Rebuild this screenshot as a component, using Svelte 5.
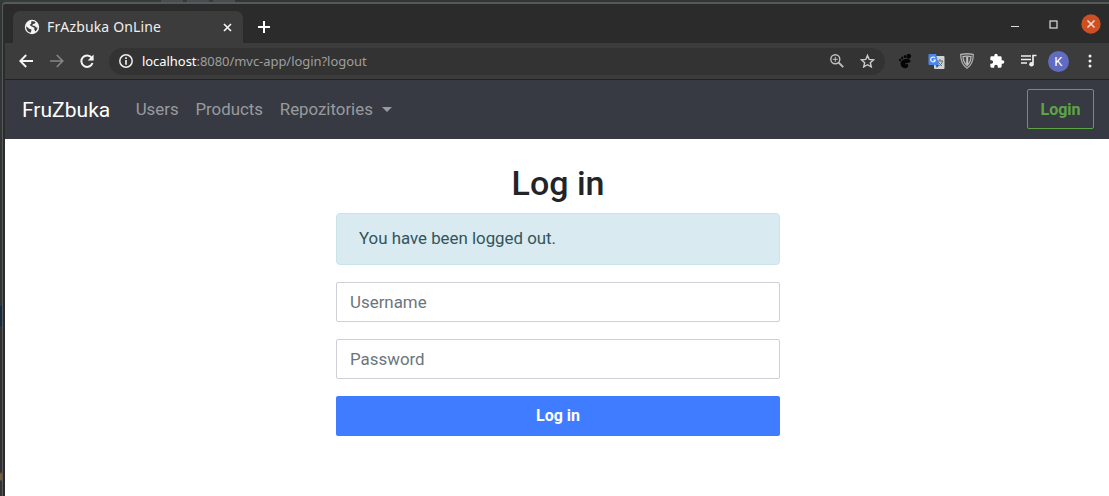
<script>
  const links = ['Users', 'Products'];
  let username = $state('');
  let password = $state('');
</script>

<div class="desktop">
  <div class="shade"></div>
  <div class="window">
    <header class="tabs">
      <div class="tab">
        <svg class="globe" width="16" height="16" viewBox="0 0 16 16"><circle cx="8" cy="8" r="7.2" fill="#f4f4f4"/><path d="M2.1 7.2l3.2 2.5c.6.5 1.8.2 2.1 1.1.2.9-.3 1.6-.8 3C4 13.2 2 10.800 2.100 7.200zM7.200 2.400c1.700-.5 3.400 0 4.500.8l-1.300 1.500-1.500.2-.7 1.700 2.800.3 1.100 1.500 1.500.2c-.2 1.500-1 2.900-2.100 3.800l-1.300-1.800.3-1.800-2.800-1.300-2-1.600 1.600-1.500z" fill="#3c3c3c"/></svg>
        <span class="title">FrAzbuka OnLine</span>
        <svg class="x" width="9" height="9" viewBox="0 0 9 9"><path d="M1 1l7 7M8 1L1 8" stroke="#f2f2f2" stroke-width="1.7"/></svg>
      </div>
      <svg class="plus" width="12" height="12" viewBox="0 0 12 12"><path d="M6 0v12M0 6h12" stroke="#fff" stroke-width="2"/></svg>
      <div class="controls">
        <svg width="8" height="14" viewBox="0 0 8 14"><path d="M0 9.500h8" stroke="#ddd"/></svg>
        <svg width="9" height="9" viewBox="0 0 9 9"><rect x="1" y="1" width="7" height="7" fill="none" stroke="#ddd" stroke-width="1.200"/></svg>
        <svg width="20" height="20" viewBox="0 0 20 20"><circle cx="10" cy="10" r="9.700" fill="#cd4f22"/><path d="M6.500 6.500l7 7M13.500 6.500l-7 7" stroke="#f6ded5" stroke-width="1.500"/></svg>
      </div>
    </header>

    <div class="toolbar">
      <svg width="14" height="14" viewBox="0 0 14 14" fill="none" stroke="#f4f4f4" stroke-width="1.900"><path d="M14 7H1.500M7.200 1L1.300 7l5.900 6"/></svg>
      <svg class="forward" width="14" height="14" viewBox="0 0 14 14" fill="none" stroke="#858585" stroke-width="1.700"><path d="M0 7h12.500M6.800 1l5.900 6-5.900 6"/></svg>
      <svg class="reload" width="14" height="14" viewBox="0 0 14 14"><path d="M11.600 3.700A5.700 5.700 0 1 0 12.500 9" fill="none" stroke="#f4f4f4" stroke-width="2"/><path d="M13.600.5v6H7.700z" fill="#f4f4f4"/></svg>
      <div class="address">
        <svg width="14" height="14" viewBox="0 0 14 14"><circle cx="7" cy="7" r="6.200" fill="none" stroke="#eee" stroke-width="1.500"/><path d="M7 6v4.700M7 3.300v1.600" stroke="#eee" stroke-width="1.700"/></svg>
        <span class="url"><b>localhost</b>:8080/mvc-app/login?logout</span>
        <svg class="search" width="14" height="14" viewBox="0 0 14 14" fill="none" stroke="#c1c1c1"><circle cx="5.300" cy="5.300" r="4.500" stroke-width="1.400"/><path d="M8.700 8.700l4.500 4.500" stroke-width="1.900"/><path d="M2.800 5.300h5M5.300 2.800v5"/></svg>
        <svg width="15" height="14" viewBox="0 0 15 14"><path d="M7.500 1.400l1.700 4 4.400.4-3.300 2.900 1 4.200-3.800-2.200-3.800 2.200 1-4.200-3.300-2.900 4.400-.4z" fill="none" stroke="#ccc" stroke-width="1.400"/></svg>
      </div>
      <div class="extensions">
        <svg width="16" height="16" viewBox="0 0 16 16" fill="#050505"><ellipse cx="11.700" cy="3.300" rx="2.300" ry="2.500" transform="rotate(20 11.700 3.300)"/><ellipse cx="8" cy="3.600" rx="1.200" ry="1.600"/><ellipse cx="5.200" cy="5" rx="1.100" ry="1.500"/><ellipse cx="3" cy="7" rx="1" ry="1.300"/><path d="M11.300 6.200C8 5.300 3.700 7.400 3.600 10.300c-.1 3.400 2.600 5.300 5.200 4.900 2.300-.4 3-2.900 1.900-3.900-.9-.8-2 .4-2.600-.2-.9-1.100 5.200-.5 5.600-3 .1-1-1.200-1.700-2.400-1.900z"/></svg>
        <svg width="17" height="17" viewBox="0 0 17 17"><rect x="6" y="3" width="10.500" height="13" rx="1" fill="#d1d3d5"/><path d="M9 8h6M12 6v2M14.500 8c-.5 3-2 4-4 5M10 9l4 4" fill="none" stroke="#647078"/><path d="M1.500 1H8l3 11H1.500a1 1 0 0 1-1-1V2a1 1 0 0 1 1-1z" fill="#4d86e9"/><path d="M7.500 12H11l-2.200 3z" fill="#315bb2"/><path d="M7 5A2.400 2.400 0 1 0 7.400 7H5.200" fill="none" stroke="#e5eeff" stroke-width="1.200"/></svg>
        <svg width="14" height="16" viewBox="0 0 14 16"><path d="M.7 1.500q6.300-1.500 12.600 0Q13.500 11 7 15.200.5 11 .7 1.500z" fill="#484848" stroke="#aaa" stroke-width="1.300"/><path d="M3 3.500q4-.8 8 0Q11 9 7 12.500 3 9 3 3.500z" fill="none" stroke="#c1c1c1" stroke-width="1.100"/><path d="M7.200 4v7" stroke="#c1c1c1" stroke-width="2"/></svg>
        <svg width="16" height="16" viewBox="0 0 24 24"><path d="M20.500 11H19V7a2 2 0 0 0-2-2h-4V3.500a2.500 2.500 0 0 0-5 0V5H4a2 2 0 0 0-2 2v3.800h1.500a2.700 2.700 0 0 1 0 5.400H2V20a2 2 0 0 0 2 2h3.800v-1.500a2.700 2.700 0 0 1 5.400 0V22H17a2 2 0 0 0 2-2v-4h1.500a2.500 2.500 0 0 0 0-5z" fill="#fff"/></svg>
        <svg width="16" height="14" viewBox="0 0 16 14"><path d="M0 2h10M0 5.500h10M0 9h6" stroke="#eee" stroke-width="1.500"/><path d="M15.500 1.500H12v8" fill="none" stroke="#eee" stroke-width="1.700"/><ellipse cx="10.500" cy="10.200" rx="2.300" ry="2.200" fill="#eee"/></svg>
        <span class="avatar">K</span>
        <svg width="4" height="14" viewBox="0 0 4 14" fill="#f1f1f1"><circle cx="2" cy="2" r="1.500"/><circle cx="2" cy="7" r="1.500"/><circle cx="2" cy="12" r="1.500"/></svg>
      </div>
    </div>

    <nav>
      <span class="brand">FruZbuka</span>
      {#each links as link}
        <span class="link">{link}</span>
      {/each}
      <span class="link">Repozitories<i></i></span>
      <button class="login">Login</button>
    </nav>

    <main>
      <form onsubmit={(e) => e.preventDefault()}>
        <h2>Log in</h2>
        <div class="alert">You have been logged out.</div>
        <input type="text" placeholder="Username" bind:value={username} />
        <input type="password" placeholder="Password" bind:value={password} />
        <button class="submit">Log in</button>
      </form>
    </main>
  </div>
</div>

<style>
  :global(body) { margin: 0; overflow: hidden; }
  * { box-sizing: border-box; }
  svg { display: block; flex: none; }
  .desktop { width: 1109px; height: 496px; display: flex; background: linear-gradient(90deg, #333c3b 0 161px, #474d51 161px 183px, #333c3b 183px 187px, #474d51 187px 209px, #333c3b 209px 213px, #474d51 213px 235px, #303735 235px); padding-top: 2px; }
  .shade { width: 2px; flex: none; background: linear-gradient(#303538 0 304px, #102c42 304px 324px, #303132 324px 470px, #795b38 472px 478px, #343434 479px); }
  .window { flex: 1; border-top: 2px solid #595959; border-left: 1px solid #595959; box-shadow: inset 2px 0 #2b2b2b; padding-left: 2px; border-top-left-radius: 4px; overflow: hidden; background: #2b2b2b; font-family: Roboto, sans-serif; }
  .tabs { height: 39px; display: flex; align-items: flex-start; background: #2b2b2b; padding: 7px 8px 0; }
  .tab { width: 230px; height: 32px; background: #3c3c3c; border-radius: 7px 7px 0 0; display: flex; align-items: center; padding: 0 11px; }
  .title { font: 14px/20px "Noto Sans", sans-serif; color: #eee; margin-left: 7px; letter-spacing: .15px; white-space: nowrap; }
  .x { margin-left: auto; }
  .plus { margin: 10px 0 0 15px; }
  .controls { margin: 3px 0 0 auto; display: flex; align-items: center; gap: 24px; height: 20px; }
  .controls svg:first-child { margin-right: 6px; }
  .controls svg:nth-child(2) { margin-right: -1px; }
  .toolbar { height: 37px; background: #3c3c3c; border-bottom: 1px solid #202224; display: flex; align-items: center; padding: 0 17px 0 14px; }
  .forward { margin-left: 17px; }
  .reload { margin-left: 16px; }
  .address { width: 776px; height: 27px; border-radius: 14px; background: #333; margin-left: 15px; display: flex; align-items: center; padding: 0 10px; }
  .url { color: #9f9f9f; font: 13px/20px "Noto Sans", sans-serif; margin-left: 9px; letter-spacing: -.05px; white-space: nowrap; }
  .url b { color: #fff; font-weight: 400; }
  .search { margin: 0 16px 0 auto; }
  .extensions { flex: 1; display: flex; align-items: center; justify-content: space-between; padding-left: 12px; }
  .avatar { width: 21px; height: 21px; border-radius: 50%; background: #606bc1; color: #fff; font-size: 13px; line-height: 21px; text-align: center; margin: 0 4px 0 -4px; }
  nav { height: 59px; background: #373a42; display: flex; align-items: center; padding: 0 15px 1px 17px; }
  .brand { font-size: 21.050px; color: #fff; margin-right: 17px; }
  .link { font-size: 16.850px; color: #999a9e; padding: 0 8.400px; display: flex; align-items: center; }
  .link i { border: 5px solid transparent; border-top-color: #999a9e; border-bottom: 0; margin-left: 9px; }
  button { font: 700 16px/24px Roboto, sans-serif; padding: 0; border-radius: 2px; height: 40px; }
  .login { width: 67px; margin-left: auto; padding-top: 2px; background: transparent; border: 1px solid #5da544; color: #5da544; }
  main { height: 357px; background: #fff; }
  form { width: 444px; margin: 0 auto; padding-top: 24px; position: relative; left: 1px; display: flex; flex-direction: column; }
  h2 { font-size: 34px; line-height: 41px; font-weight: 500; text-align: center; color: #212529; margin: 0 0 9px; }
  .alert { height: 52px; padding: 0 22px; border: 1px solid #c7e4e8; border-radius: 4px; background: #d9ebf0; color: #33545c; font-size: 16.850px; line-height: 48px; margin-bottom: 17px; }
  input { width: 100%; height: 40px; padding: 0 13px; border: 1px solid #cfcfd8; border-radius: 2px; margin: 0 0 17px; font: 16.900px/24px Roboto, sans-serif; background: #fff; color: #495057; outline: none; }
  input::placeholder { color: #6c757d; opacity: 1; }
  .submit { width: 100%; background: #407cff; border: 0; color: #fff; }
</style>
